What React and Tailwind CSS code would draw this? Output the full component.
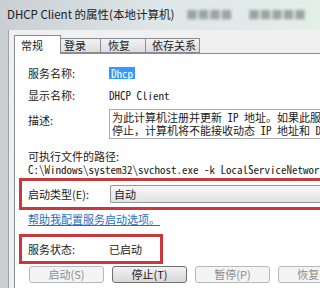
export default function App() {
  const mono = "font-['Noto_Sans_Mono_CJK_SC','Liberation_Mono',monospace]";
  return (
    <div className="w-[320px] h-[288px] overflow-hidden bg-gradient-to-r from-[#c9cfd3] via-[#dfe6e8] to-[#e3efe8] font-['Noto_Sans_CJK_SC',sans-serif] text-[11px] text-[#1a1a1a] flex flex-col">
      <div className="h-[30px] shrink-0 flex items-center pl-[7px] pb-[1px] text-[11.5px] leading-none text-[#202020]">
        <span className="whitespace-nowrap">DHCP Client 的属性(本地计算机)</span>
        <span className="ml-[12px] text-[#9aa3a3] blur-[1.5px]">■■■■</span>
        <span className="ml-[16px] text-[#9aa3a3] blur-[1.5px]">■■■■■</span>
      </div>
      <div className="flex-1 flex pl-[8px] min-h-0">
        <div className="flex-1 bg-[#f0f0f0] pl-[5px] pt-[5px] flex flex-col min-w-0 border-l border-[#9aa2a8]">
          <div className="h-[18px] flex items-end shrink-0">
            <div className="h-[19px] w-[47px] -mb-px bg-white border border-b-0 border-[#898c95] relative z-10 flex items-center pl-[6px] leading-none">常规</div>
            <div className="h-[15px] w-[41px] -ml-px border border-[#898c95] bg-gradient-to-b from-[#f3f3f3] to-[#dcdcdc] flex items-center pl-[3px] leading-none">登录</div>
            <div className="h-[15px] w-[46px] -ml-px border border-[#898c95] bg-gradient-to-b from-[#f3f3f3] to-[#dcdcdc] flex items-center pl-[7px] leading-none">恢复</div>
            <div className="h-[15px] w-[55px] -ml-px border border-[#898c95] bg-gradient-to-b from-[#f3f3f3] to-[#dcdcdc] flex items-center pl-[6px] leading-none">依存关系</div>
          </div>
          <div className="flex-1 bg-white border border-r-0 border-b-0 border-[#898c95] pl-[4px] flex flex-col min-w-0">
            <div className="mt-[12px] h-[14px] flex items-center pl-[9px] leading-none">
              <span className="w-[81px] shrink-0">服务名称:</span>
              <span className={`${mono} bg-[#3399ff] text-white px-[2px] h-[12px] flex items-center text-[11px]`}>Dhcp</span>
            </div>
            <div className="mt-[8px] h-[14px] flex items-center pl-[9px] leading-none">
              <span className="w-[81px] shrink-0">显示名称:</span>
              <span className={`${mono} text-[11px] whitespace-nowrap`}>DHCP Client</span>
            </div>
            <div className="mt-[7px] h-[30px] flex items-start pl-[9px] leading-none">
              <span className="w-[81px] shrink-0 pt-[6px]">描述:</span>
              <div className={`${mono} flex-1 min-w-0 h-[30px] border border-r-0 border-[#abadb3] pl-[2px] pt-[1px] text-[11px] leading-[13px] whitespace-nowrap overflow-hidden`}>
                <div>为此计算机注册并更新 IP 地址。如果此服务被</div>
                <div>停止，计算机将不能接收动态 IP 地址和 DNS 更新。</div>
              </div>
            </div>
            <div className="mt-[11px] h-[13px] flex items-center pl-[9px] leading-none whitespace-nowrap">可执行文件的路径:</div>
            <div className={`${mono} h-[13px] flex items-center pl-[9px] text-[11px] leading-none whitespace-nowrap overflow-hidden`}>
              C:\Windows\system32\svchost.exe -k LocalServiceNetworkRestricted
            </div>
            <div className="mt-[2px] h-[32px] border-[3px] border-r-0 border-[#c8383c] flex items-center pl-[6px] leading-none">
              <span className="w-[81px] shrink-0">启动类型(E):</span>
              <div className="ml-px flex-1 h-[18px] border border-r-0 border-[#979797] rounded-l-[2px] bg-gradient-to-b from-[#f8f8f8] to-[#e2e2e2] flex items-center pl-[3px]">自动</div>
            </div>
            <div className="mt-[2px] h-[14px] flex items-center pl-[9px] leading-none">
              <span className="text-[#1d6fc4] underline">帮助我配置服务启动选项。</span>
            </div>
            <div className="mt-[8px] h-[30px] w-[144px] border-[3px] border-[#c8383c] flex items-center pl-[6px] leading-none">
              <span className="w-[81px] shrink-0">服务状态:</span>
              <span>已启动</span>
            </div>
            <div className="mt-[2px] flex gap-[8px] pl-[10px] leading-none">
              <div className="w-[75px] h-[17px] shrink-0 rounded-[3px] border border-[#b5b9bc] bg-[#f4f4f4] text-[#8c8c8c] flex items-center justify-center">启动(S)</div>
              <div className="w-[75px] h-[17px] shrink-0 rounded-[3px] border border-[#707070] bg-gradient-to-b from-[#f2f2f2] to-[#d8d8d8] flex items-center justify-center">停止(T)</div>
              <div className="w-[75px] h-[17px] shrink-0 rounded-[3px] border border-[#b5b9bc] bg-[#f4f4f4] text-[#8c8c8c] flex items-center justify-center">暂停(P)</div>
              <div className="w-[75px] h-[17px] shrink-0 rounded-[3px] border border-[#b5b9bc] bg-[#f4f4f4] text-[#8c8c8c] flex items-center justify-center">恢复(R)</div>
            </div>
          </div>
        </div>
      </div>
    </div>
  );
}
